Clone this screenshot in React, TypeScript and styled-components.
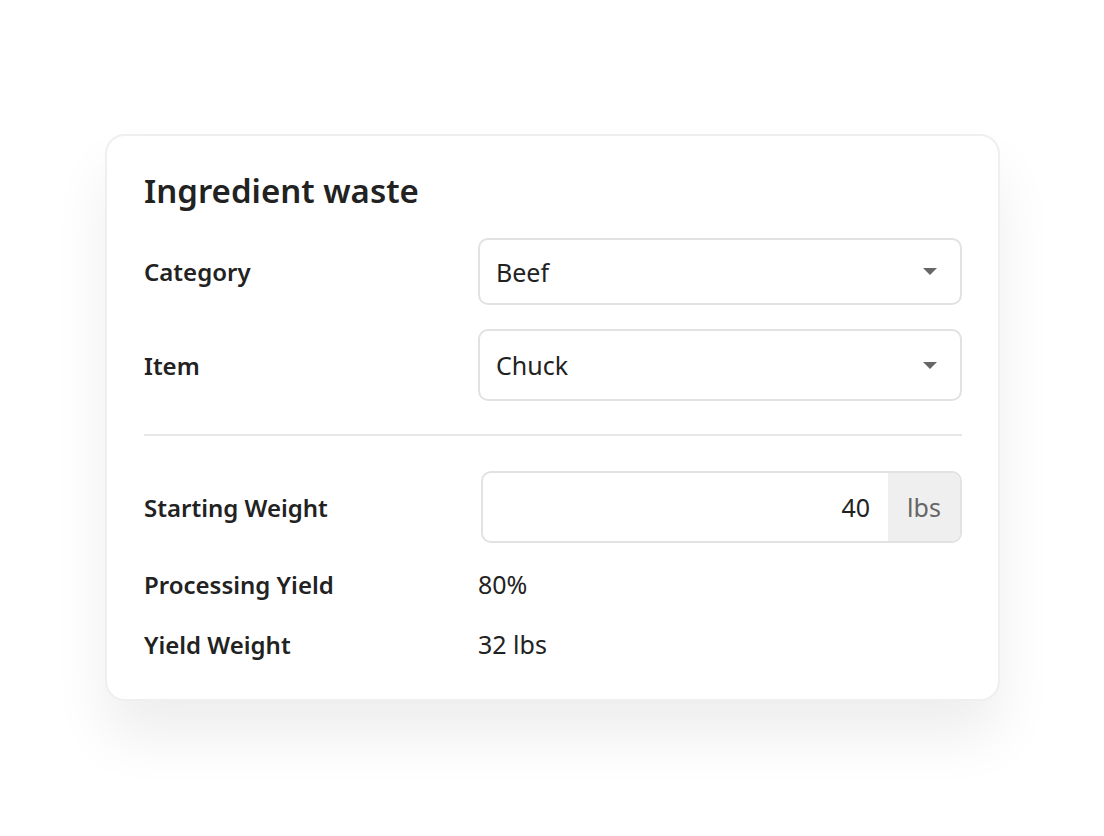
import React from "react";
import styled, { createGlobalStyle } from "styled-components";

const GlobalStyle = createGlobalStyle`
  html, body {
    margin: 0;
    padding: 0;
    background: #ffffff;
    font-family: "Noto Sans", "Open Sans", sans-serif;
    color: #222222;
  }
`;

export default function App() {
  return (
    <Page>
      <GlobalStyle />
      <Card>
        <Title>Ingredient waste</Title>
        <Row>
          <Label>Category</Label>
          <Select $height={67}>
            <span>Beef</span>
            <Caret />
          </Select>
        </Row>
        <Row $gap={24}>
          <Label>Item</Label>
          <Select $height={72}>
            <span>Chuck</span>
            <Caret />
          </Select>
        </Row>
        <Divider />
        <Row>
          <Label>Starting Weight</Label>
          <InputGroup>
            <NumberField>40</NumberField>
            <Addon>lbs</Addon>
          </InputGroup>
        </Row>
        <InfoList>
          <InfoRow>
            <Label>Processing Yield</Label>
            <Value>80%</Value>
          </InfoRow>
          <InfoRow>
            <Label>Yield Weight</Label>
            <Value>32 lbs</Value>
          </InfoRow>
        </InfoList>
      </Card>
    </Page>
  );
}

const Page = styled.div`
  width: 1104px;
  height: 836px;
  padding-top: 134px;
  padding-left: 105px;
  box-sizing: border-box;
`;

const Card = styled.div`
  width: 895px;
  box-sizing: border-box;
  background: #fff;
  border: 2px solid #efefef;
  border-radius: 20px;
  padding: 32px 36px 25px 37px;
  box-shadow: 0 36px 56px rgba(0, 0, 0, 0.07);
`;

const Title = styled.h1`
  margin: 0 0 24px 0;
  font-size: 33px;
  font-weight: 600;
  line-height: 46px;
  color: #222;
`;

const Row = styled.div<{ $gap?: number }>`
  display: grid;
  grid-template-columns: 334px 1fr;
  align-items: center;
  margin-top: ${(p) => p.$gap ?? 0}px;
`;

const Label = styled.div`
  font-size: 24px;
  font-weight: 600;
  color: #222;
`;

const Select = styled.div<{ $height: number }>`
  height: ${(p) => p.$height}px;
  box-sizing: border-box;
  border: 2px solid #e2e2e2;
  border-radius: 10px;
  display: flex;
  align-items: center;
  justify-content: space-between;
  padding: 0 23px 0 16px;
  font-size: 25px;
  color: #222;
`;

const Caret = styled.span`
  width: 0;
  height: 0;
  border-left: 7px solid transparent;
  border-right: 7px solid transparent;
  border-top: 7px solid #666;
`;

const Divider = styled.div`
  height: 2px;
  background: #e8e8e8;
  margin: 33px 0 35px 0;
`;

const InputGroup = styled.div`
  display: flex;
  height: 72px;
  margin-left: 3px;
  box-sizing: border-box;
  border: 2px solid #e2e2e2;
  border-radius: 10px;
  overflow: hidden;
`;

const NumberField = styled.div`
  flex: 1;
  display: flex;
  align-items: center;
  justify-content: flex-end;
  padding-right: 18px;
  font-size: 25px;
  color: #222;
`;

const Addon = styled.div`
  width: 72px;
  background: #efefef;
  display: flex;
  align-items: center;
  justify-content: center;
  font-size: 25px;
  color: #666;
`;

const InfoList = styled.div`
  display: flex;
  flex-direction: column;
  margin-top: 11px;
`;

const InfoRow = styled.div`
  display: grid;
  grid-template-columns: 334px 1fr;
  align-items: center;
  height: 60px;
`;

const Value = styled.div`
  font-size: 25px;
  color: #222;
`;
